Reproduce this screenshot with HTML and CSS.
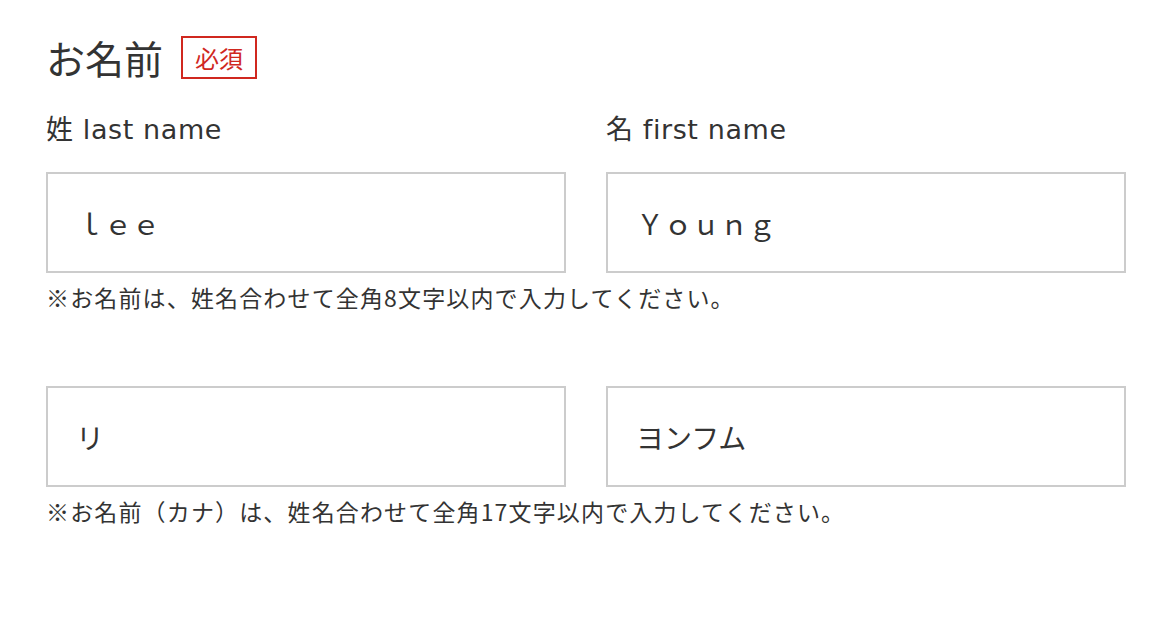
FILE: index.html
```html
<!DOCTYPE html>
<html lang="ja">
<head>
<meta charset="utf-8">
<link rel="stylesheet" href="styles.css">
</head>
<body>
<section class="form-block">
  <div class="title-row">
    <h2 class="title">お名前</h2>
    <span class="badge">必須</span>
  </div>
  <div class="grid names">
    <div class="field">
      <label class="label">姓 last name</label>
      <div class="input">ｌｅｅ</div>
    </div>
    <div class="field">
      <label class="label">名 first name</label>
      <div class="input">Ｙｏｕｎｇ</div>
    </div>
  </div>
  <p class="note">※お名前は、姓名合わせて全角8文字以内で入力してください。</p>
  <div class="grid kana">
    <div class="field"><div class="input">リ</div></div>
    <div class="field"><div class="input">ヨンフム</div></div>
  </div>
  <p class="note">※お名前（カナ）は、姓名合わせて全角17文字以内で入力してください。</p>
</section>
</body>
</html>
```

FILE: styles.css
```css
html, body {
  margin: 0;
  padding: 0;
  background: #fff;
}
body {
  font-family: "Noto Sans CJK JP", "Noto Sans", sans-serif;
  color: #333;
}
.form-block {
  width: 1080px;
  padding: 36px 0 0 46px;
}
.title-row {
  display: flex;
  align-items: center;
  gap: 18px;
  height: 43px;
}
.title {
  margin: 0;
  font-size: 39px;
  font-weight: 400;
  line-height: 43px;
}
.badge {
  box-sizing: border-box;
  height: 43px;
  padding: 0 12px;
  border: 2px solid #d0281f;
  color: #d0281f;
  font-size: 24px;
  line-height: 39px;
}
.grid {
  display: grid;
  grid-template-columns: 520px 520px;
  column-gap: 40px;
}
.names {
  margin-top: 33px;
}
.field {
  display: flex;
  flex-direction: column;
}
.label {
  font-family: "DejaVu Sans", "Noto Sans CJK JP", sans-serif;
  font-size: 27px;
  line-height: 36px;
  letter-spacing: 0.6px;
  margin-bottom: 24px;
}
.input {
  box-sizing: border-box;
  height: 101px;
  border: 2px solid #cccccc;
  padding: 0 28px;
  font-size: 28px;
  display: flex;
  align-items: center;
}
.note {
  margin: 8px 0 0;
  font-size: 23px;
  line-height: 32px;
  letter-spacing: 1.15px;
}
.kana {
  margin-top: 73px;
}
```
